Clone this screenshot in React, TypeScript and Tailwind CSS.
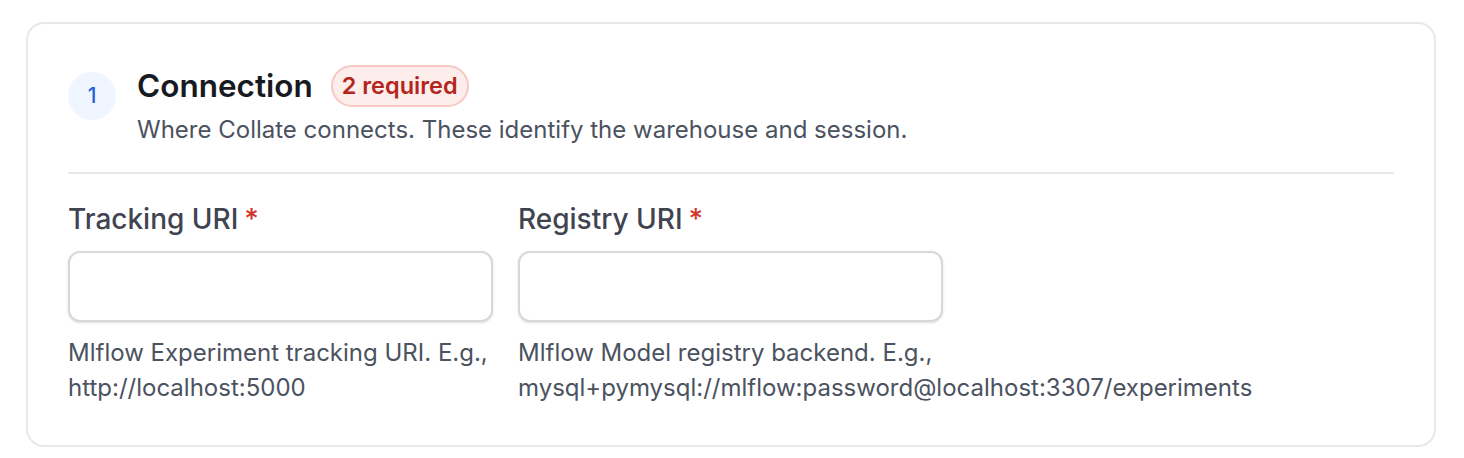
export default function App() {
  const fields = [
    {
      label: 'Tracking URI',
      help: (
        <>
          Mlflow Experiment tracking URI. E.g.,
          <br />
          http://localhost:5000
        </>
      ),
    },
    {
      label: 'Registry URI',
      help: (
        <>
          Mlflow Model registry backend. E.g.,
          <br />
          mysql+pymysql://mlflow:password@localhost:3307/experiments
        </>
      ),
    },
  ];

  return (
    <div className="min-h-screen bg-white pl-[26px] pt-[22px] font-['Inter',sans-serif]">
      <div className="w-[1410px] rounded-[18px] border-2 border-[#e8e8e8] px-[40px] pt-[41px] pb-[40px]">
        <div className="flex items-start gap-[21px]">
          <div className="mt-[7px] flex h-[48px] w-[48px] shrink-0 items-center justify-center rounded-full bg-[#eff6ff] text-[21px] font-medium text-[#2b5fd9]">
            1
          </div>
          <div>
            <div className="flex items-center gap-[18px]">
              <h2 className="text-[31.5px] leading-[42px] font-semibold text-[#171a21]">Connection</h2>
              <span className="flex h-[42px] items-center rounded-full border-2 border-[#f6c9c3] bg-[#fdeeec] px-[9px] text-[23.5px] font-semibold text-[#b3261e]">
                2 required
              </span>
            </div>
            <p className="mt-[8px] text-[24px] leading-[30px] text-[#4b5260]">
              Where Collate connects. These identify the warehouse and session.
            </p>
          </div>
        </div>

        <div className="mt-[27px] h-[2px] bg-[#e8e8e8]" />

        <div className="mt-[29px] grid grid-cols-[425px_425px] gap-x-[25px]">
          {fields.map((f) => (
            <div key={f.label}>
              <label className="flex items-center gap-[6px] text-[28px] leading-[32px] font-medium text-[#3f4450]">
                {f.label}
                <span className="text-[#d0342c]">*</span>
              </label>
              <input
                type="text"
                className="mt-[16px] block h-[71px] w-full rounded-[12px] border-2 border-[#d8d8dc] bg-white shadow-sm outline-none"
              />
              <p className="mt-[13px] whitespace-nowrap text-[24px] leading-[35px] text-[#4b5260]">{f.help}</p>
            </div>
          ))}
        </div>
      </div>
    </div>
  );
}
